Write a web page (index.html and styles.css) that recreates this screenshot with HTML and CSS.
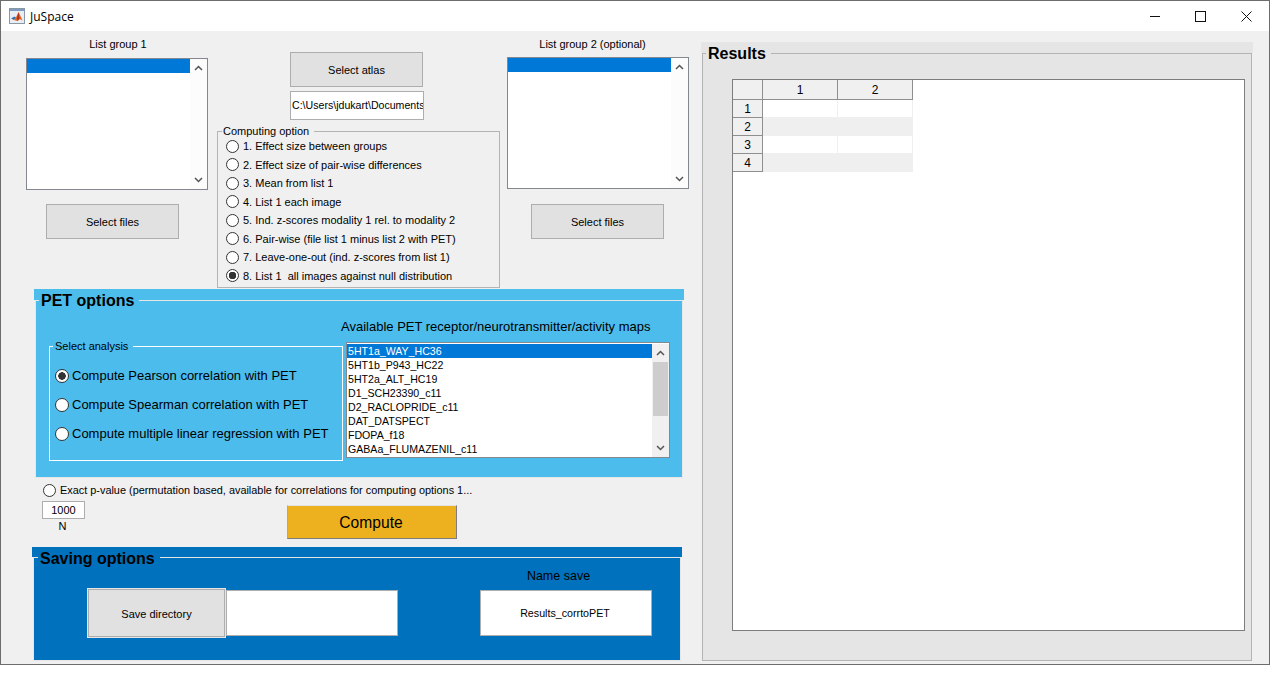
FILE: index.html
```html
<!DOCTYPE html>
<html lang="en">
<head>
    <meta charset="UTF-8">
    <meta name="viewport" content="width=device-width, initial-scale=1.0">
    <title>JuSpace</title>
    <link rel="stylesheet" href="styles.css">
</head>
<body>
    <div class="window">
        <div class="titlebar">
            <svg class="app-icon" width="16" height="16" viewBox="0 0 16 16">
                <rect x="0.5" y="0.5" width="15" height="15" fill="#e8eef4" stroke="#8a97a6"/>
                <rect x="1" y="1" width="14" height="2" fill="#7f9cc0"/>
                <path d="M2 10.500 L5.500 8.500 L7 9.500 L5 12 Z" fill="#2f6fb5"/>
                <path d="M5 12 L7 9.500 L9.500 4 L11 7 L13.500 12.500 L10.500 11 L8.500 13 Z" fill="#e2621b"/>
                <path d="M9.500 4 L8 10 L8.500 13 L10.500 11 Z" fill="#b5301c"/>
            </svg>
            <span class="app-name">JuSpace</span>
            <div class="win-buttons">
                <svg width="10" height="10" viewBox="0 0 10 10"><path d="M0 5.500H10" stroke="#111" fill="none"/></svg>
                <svg width="11" height="11" viewBox="0 0 11 11"><rect x="0.500" y="0.500" width="10" height="10" stroke="#111" fill="none"/></svg>
                <svg width="11" height="11" viewBox="0 0 11 11"><path d="M0.500 0.500L10.500 10.500M10.500 0.500L0.500 10.500" stroke="#111" fill="none"/></svg>
            </div>
        </div>

        <div class="client">
            <div class="left">
                <div class="top">
                    <div class="list-col list-col-1">
                        <div class="small-label">List group 1</div>
                        <div class="listbox file-list">
                            <div class="list-rows"><div class="row selected">&nbsp;</div></div>
                            <div class="scrollbar plain">
                                <svg width="9" height="6" viewBox="0 0 9 6"><path d="M1 5L4.500 1.500L8 5" stroke="#555" stroke-width="1.500" fill="none"/></svg>
                                <svg width="9" height="6" viewBox="0 0 9 6"><path d="M1 1L4.500 4.500L8 1" stroke="#555" stroke-width="1.500" fill="none"/></svg>
                            </div>
                        </div>
                        <button class="btn select-files">Select files</button>
                    </div>

                    <div class="mid-col">
                        <button class="btn select-atlas">Select atlas</button>
                        <div class="path-box">C:\Users\jdukart\Documents</div>
                        <fieldset class="computing">
                            <legend>Computing option</legend>
                            <label class="opt"><input type="radio" name="comp">1. Effect size between groups</label>
                            <label class="opt"><input type="radio" name="comp">2. Effect size of pair-wise differences</label>
                            <label class="opt"><input type="radio" name="comp">3. Mean from list 1</label>
                            <label class="opt"><input type="radio" name="comp">4. List 1 each image</label>
                            <label class="opt"><input type="radio" name="comp">5. Ind. z-scores modality 1 rel. to modality 2</label>
                            <label class="opt"><input type="radio" name="comp">6. Pair-wise (file list 1 minus list 2 with PET)</label>
                            <label class="opt"><input type="radio" name="comp">7. Leave-one-out (ind. z-scores from list 1)</label>
                            <label class="opt"><input type="radio" name="comp" checked>8. List 1&nbsp; all images against null distribution</label>
                        </fieldset>
                    </div>

                    <div class="list-col list-col-2">
                        <div class="small-label">List group 2 (optional)</div>
                        <div class="listbox file-list">
                            <div class="list-rows"><div class="row selected">&nbsp;</div></div>
                            <div class="scrollbar plain">
                                <svg width="9" height="6" viewBox="0 0 9 6"><path d="M1 5L4.500 1.500L8 5" stroke="#555" stroke-width="1.500" fill="none"/></svg>
                                <svg width="9" height="6" viewBox="0 0 9 6"><path d="M1 1L4.500 4.500L8 1" stroke="#555" stroke-width="1.500" fill="none"/></svg>
                            </div>
                        </div>
                        <button class="btn select-files">Select files</button>
                    </div>
                </div>

                <div class="pet">
                    <div class="band"></div>
                    <fieldset class="panel">
                        <legend>PET options</legend>
                        <div class="pet-body">
                            <fieldset class="analysis">
                                <legend>Select analysis</legend>
                                <label class="method"><input type="radio" name="method" checked>Compute Pearson correlation with PET</label>
                                <label class="method"><input type="radio" name="method">Compute Spearman correlation with PET</label>
                                <label class="method"><input type="radio" name="method">Compute multiple linear regression with PET</label>
                            </fieldset>
                            <div class="maps">
                                <div class="maps-title">Available PET receptor/neurotransmitter/activity maps</div>
                                <div class="listbox maps-list">
                                    <div class="list-rows">
                                        <div class="row selected">5HT1a_WAY_HC36</div>
                                        <div class="row">5HT1b_P943_HC22</div>
                                        <div class="row">5HT2a_ALT_HC19</div>
                                        <div class="row">D1_SCH23390_c11</div>
                                        <div class="row">D2_RACLOPRIDE_c11</div>
                                        <div class="row">DAT_DATSPECT</div>
                                        <div class="row">FDOPA_f18</div>
                                        <div class="row">GABAa_FLUMAZENIL_c11</div>
                                    </div>
                                    <div class="scrollbar">
                                        <svg width="9" height="6" viewBox="0 0 9 6"><path d="M1 5L4.500 1.500L8 5" stroke="#555" stroke-width="1.500" fill="none"/></svg>
                                        <div class="track"><div class="thumb"></div></div>
                                        <svg width="9" height="6" viewBox="0 0 9 6"><path d="M1 1L4.500 4.500L8 1" stroke="#555" stroke-width="1.500" fill="none"/></svg>
                                    </div>
                                </div>
                            </div>
                        </div>
                    </fieldset>
                </div>

                <label class="exact"><input type="radio" name="exact">Exact p-value (permutation based, available for correlations for computing options 1...</label>

                <div class="run-row">
                    <div class="perm">
                        <div class="perm-box">1000</div>
                        <div class="perm-label">N</div>
                    </div>
                    <button class="compute">Compute</button>
                </div>

                <div class="saving">
                    <div class="band dark"></div>
                    <fieldset class="panel dark">
                        <legend>Saving options</legend>
                        <div class="save-body">
                            <button class="btn save-dir">Save directory</button>
                            <div class="save-box"></div>
                            <div class="name-col">
                                <div class="name-label">Name save</div>
                                <div class="save-box name-box">Results_corrtoPET</div>
                            </div>
                        </div>
                    </fieldset>
                </div>
            </div>

            <div class="right">
                <div class="band grey"></div>
                <fieldset class="panel results">
                    <legend>Results</legend>
                    <div class="table-area">
                        <table class="result-table">
                            <tr><th class="corner"></th><th>1</th><th>2</th></tr>
                            <tr><th>1</th><td></td><td></td></tr>
                            <tr class="alt"><th>2</th><td></td><td></td></tr>
                            <tr><th>3</th><td></td><td></td></tr>
                            <tr class="alt"><th>4</th><td></td><td></td></tr>
                        </table>
                    </div>
                </fieldset>
            </div>
        </div>
    </div>
</body>
</html>
```

FILE: styles.css
```css
* {
    box-sizing: border-box;
}
body {
    font-family: "Liberation Sans", Arial, sans-serif;
    font-size: 11px;
    color: #000;
    background-color: #fff;
    margin: 0;
    padding: 0;
}
.window {
    width: 1270px;
    height: 665px;
    border: 1px solid #6d6d6d;
    background: #f0f0f0;
}
.titlebar {
    height: 30px;
    background: #fff;
    display: flex;
    align-items: center;
    padding-left: 8px;
}
.app-name {
    font-family: "Open Sans", sans-serif;
    font-size: 12px;
    margin-left: 5px;
}
.win-buttons {
    margin-left: auto;
    display: flex;
    align-items: center;
    gap: 35px;
    padding-right: 17px;
}
.client {
    display: flex;
}
.left {
    width: 700px;
    flex: none;
}
.top {
    display: flex;
    height: 258px;
    padding-left: 25px;
}
.list-col {
    width: 182px;
    flex: none;
    padding-top: 6px;
}
.small-label {
    height: 14px;
    line-height: 14px;
    text-align: center;
}
.list-col-1 .small-label {
    padding-left: 2px;
}
.listbox {
    display: flex;
    background: #fff;
    border: 1px solid #828790;
}
.file-list {
    height: 132px;
    margin-top: 7px;
}
.list-col-2 {
    margin-left: 7px;
}
.list-col-2 .small-label {
    padding-right: 11px;
}
.list-col-2 .file-list {
    margin-top: 6px;
}
.list-col-2 .select-files {
    margin-top: 15px;
    margin-left: 24px;
}
.list-rows {
    flex: 1;
    min-width: 0;
}
.row {
    height: 14px;
    line-height: 14px;
    padding-left: 1px;
    white-space: nowrap;
}
.row.selected {
    background: #0078d7;
    color: #fff;
}
.scrollbar {
    width: 17px;
    flex: none;
    background: #f0f0f0;
    display: flex;
    flex-direction: column;
    align-items: center;
    padding: 6px 0;
}
.scrollbar.plain {
    background: #fcfcfc;
    justify-content: space-between;
}
.track {
    flex: 1;
    width: 100%;
    margin: 1px 0 5px;
}
.thumb {
    height: 54px;
    margin-top: 5px;
    background: #cdcdcd;
    margin-left: 1px;
    margin-right: 1px;
}
.btn {
    display: block;
    font: inherit;
    color: #000;
    background: #e1e1e1;
    border: 1px solid #adadad;
    padding: 0;
}
.select-files {
    width: 133px;
    height: 35px;
    margin: 14px 0 0 20px;
}
.mid-col {
    width: 283px;
    flex: none;
    margin-left: 9px;
    padding-top: 21px;
}
.select-atlas {
    width: 133px;
    height: 35px;
    margin-left: 73px;
}
.path-box {
    width: 134px;
    height: 29px;
    line-height: 27px;
    margin: 4px 0 0 73px;
    padding: 0 1px;
    background: #fff;
    border: 1px solid #adadad;
    overflow: hidden;
    white-space: nowrap;
    font-size: 10.600px;
}
fieldset {
    margin: 0;
    padding: 0;
    min-width: 0;
}
.computing {
    height: 163px;
    margin-top: 5px;
    border: 1px solid #b4b4b4;
    padding: 0 0 0 8px;
}
.computing legend {
    margin-left: -4px;
    padding: 0 5px 0 1px;
    line-height: 12px;
}
.opt {
    display: flex;
    align-items: center;
    height: 18.500px;
    white-space: nowrap;
}
input[type="radio"] {
    appearance: none;
    width: 13px;
    height: 13px;
    margin: 0 4px 0 0;
    flex: none;
    background: #fff;
    border: 1px solid #333;
    border-radius: 50%;
}
input[type="radio"]:checked {
    background: radial-gradient(circle, #333 0, #333 3.500px, #fff 4px);
}
.pet {
    width: 650px;
    margin-left: 33px;
}
.band {
    height: 11px;
    background: #4dbdec;
}
.band.dark {
    height: 10px;
    background: #0072bd;
}
.band.grey {
    background: #e5e5e5;
    margin-top: 11px;
}
.panel {
    margin: -10px 1px 0;
    height: 188px;
    background: #4bbcec;
    border: 1px solid #e6e6e6;
}
.panel > legend {
    margin-left: 3px;
    padding: 2px 5px 0 2px;
    font-size: 16px;
    font-weight: bold;
    line-height: 18px;
}
.pet-body {
    display: flex;
    align-items: flex-start;
    padding-left: 13px;
}
.analysis {
    width: 294px;
    height: 121px;
    margin-top: 30px;
    flex: none;
    border: 1px solid #fff;
    padding: 0 0 0 5px;
}
.analysis legend {
    margin-left: -2px;
    padding: 0 5px 0 2px;
    line-height: 12px;
}
.method {
    display: flex;
    align-items: center;
    height: 29px;
    font-size: 13px;
    white-space: nowrap;
}
.method:first-of-type {
    margin-top: 9px;
}
.method input[type="radio"] {
    width: 14px;
    height: 14px;
    margin-right: 3px;
}
.maps {
    margin: 9px 0 0 -2px;
}
.maps-title {
    height: 16px;
    line-height: 16px;
    font-size: 13px;
    white-space: nowrap;
}
.maps-list {
    width: 324px;
    height: 116px;
    margin: 7px 0 0 5px;
    padding-top: 1px;
    font-size: 10.600px;
}
.exact {
    display: flex;
    align-items: center;
    height: 18px;
    margin-top: 3px;
    padding-left: 42px;
    font-size: 10.900px;
    white-space: nowrap;
}
.run-row {
    display: flex;
    height: 48px;
    align-items: flex-start;
    padding-left: 41px;
}
.perm {
    width: 43px;
    padding-top: 2px;
    flex: none;
}
.perm-box {
    height: 18px;
    line-height: 16px;
    text-align: center;
    background: #fff;
    border: 1px solid #adadad;
}
.perm-label {
    height: 14px;
    line-height: 14px;
    text-align: center;
    padding-right: 2px;
}
.compute {
    width: 170px;
    height: 34px;
    margin: 6px 0 0 202px;
    padding: 2px 2px 0 0;
    font-family: inherit;
    font-size: 15.600px;
    color: #000;
    background: #edb120;
    border: 1px solid;
    border-color: #e3e3e3 #7d7d7d #7d7d7d #a8a8a8;
}
.saving {
    width: 650px;
    margin-left: 31px;
}
.panel.dark {
    margin-top: -10px;
    height: 114px;
    background: #0072bd;
}
.panel.dark > legend {
    margin-left: 4px;
    padding-top: 3px;
}
.save-body {
    display: flex;
    align-items: flex-start;
    padding-left: 53px;
}
.save-dir {
    width: 139px;
    height: 50px;
    margin-top: 20px;
    padding-top: 2px;
    flex: none;
    border: 2px solid #adadad;
    outline: 1px solid #e6e6e6;
    outline-offset: -1px;
}
.save-box {
    width: 172px;
    height: 46px;
    margin-top: 22px;
    flex: none;
    background: #fff;
    border: 1px solid #adadad;
    text-align: center;
    line-height: 44px;
}
.name-col {
    margin-left: 82px;
}
.name-label {
    height: 16px;
    line-height: 16px;
    font-size: 12.500px;
    text-align: center;
    padding-right: 15px;
}
.name-box {
    margin-top: 6px;
    padding-right: 2px;
    font-size: 10.700px;
}
.right {
    width: 552px;
    flex: none;
}
.panel.results {
    height: 618px;
    background: #e5e5e5;
    border-color: #b4b4b4;
}
.table-area {
    width: 513px;
    height: 552px;
    margin: 16px 0 0 29px;
    background: #fff;
    border: 1px solid #7d7d7d;
}
.result-table {
    border-collapse: separate;
    border-spacing: 0;
    table-layout: fixed;
    width: 180px;
}
.result-table th {
    height: 18px;
    padding: 0;
    font-weight: normal;
    font-size: 12px;
    background: #f0f0f0;
    border-right: 1px solid #8f8f8f;
    border-bottom: 1px solid #8f8f8f;
}
.result-table tr:first-child th {
    height: 20px;
    width: 75px;
}
.result-table tr:first-child th.corner {
    width: 30px;
}
.result-table td {
    padding: 0;
    height: 18px;
    background: #fff;
    border-right: 1px solid #f0f0f0;
    border-bottom: 1px solid #f0f0f0;
}
.result-table tr.alt td {
    background: #efefef;
    border-color: #efefef;
}
```
